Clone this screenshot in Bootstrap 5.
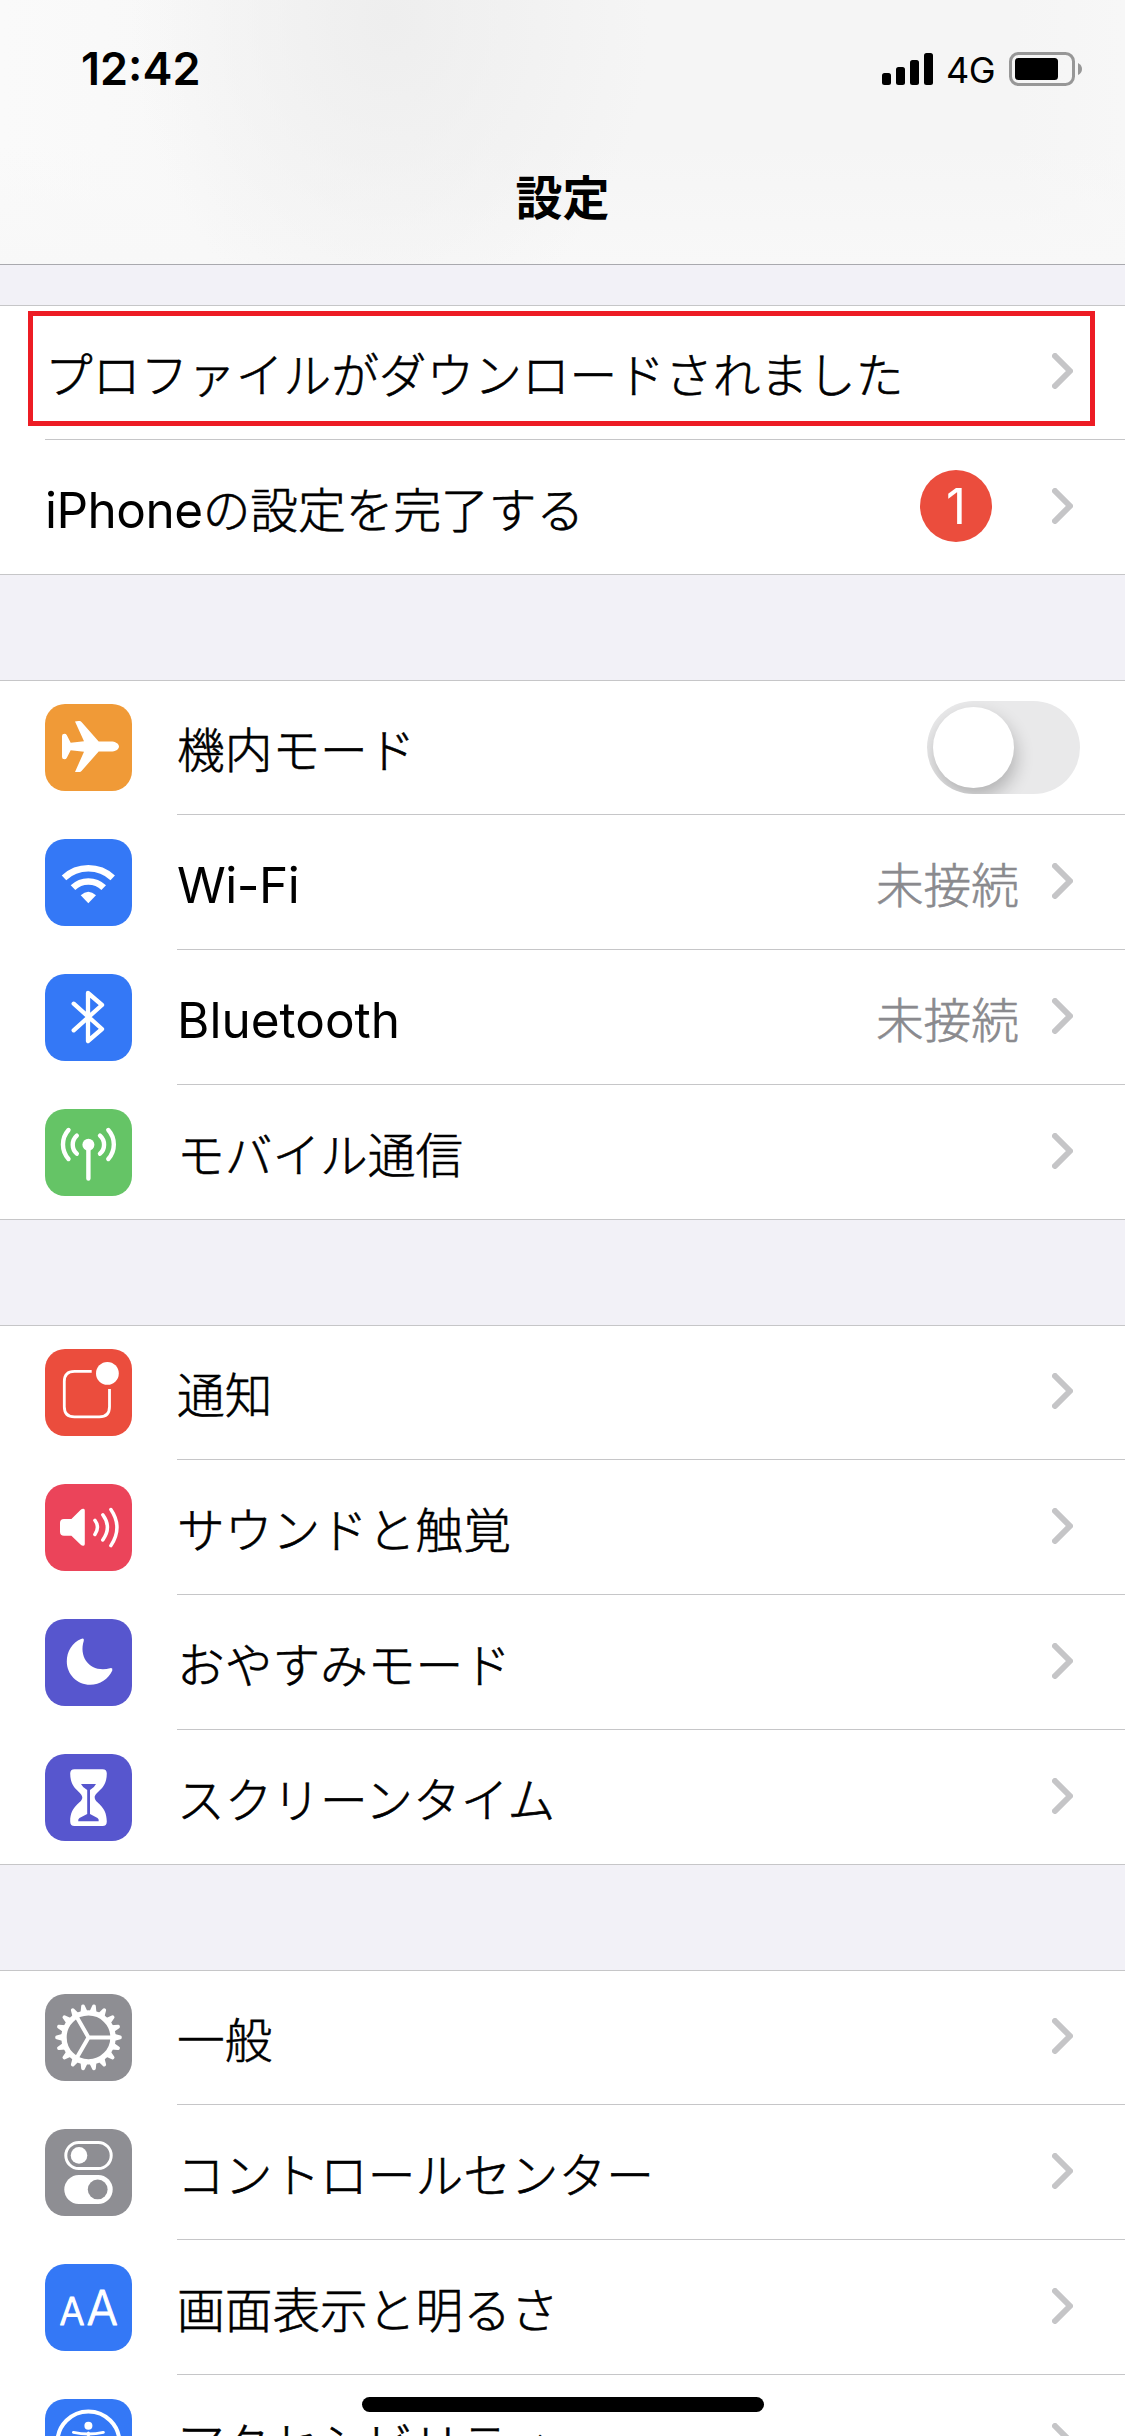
<!DOCTYPE html>
<html lang="ja">
<head>
<meta charset="utf-8">
<meta name="viewport" content="width=device-width, initial-scale=1">
<title>設定</title>
<link href="https://cdn.jsdelivr.net/npm/bootstrap@5.3.0/dist/css/bootstrap.min.css" rel="stylesheet">
<style>
  body { font-family: Inter, "Noto Sans CJK JP", sans-serif; font-size: 47.7px; background: #f2f1f7; color: #000; }
  .top-area { height: 265px; border-bottom: 1px solid #a9a9ae; background: radial-gradient(ellipse 260px 320px at 390px 20px, #eeeeee, rgba(238,238,238,0)), linear-gradient(180deg, rgba(249,249,249,0) 55%, #f8f8f8 100%), linear-gradient(90deg, #fafafa 0, #f5f5f5 45%, #f5f5f5 90%, #f7f7f7 100%); }
  .status-line { height: 138px; padding: 0 43px 1px 81px; }
  .clock { font-size: 45px; font-weight: 600; line-height: 1; }
  .net { font-size: 36px; line-height: 1; letter-spacing: -.5px; padding: 2px 14px 0 13px; }
  .page-title { font-size: 47px; font-weight: 700; line-height: 1; padding-top: 36px; }
  .groups { padding-top: 40px; gap: 105px; }
  .cells { background: #fff; box-shadow: inset 0 1px #c6c6c8, inset 0 -1px #c6c6c8; }
  .cell-row { height: 135px; padding: 0 0 3px 45px; position: relative; }
  .cell-row:not(:last-child)::after { content: ""; position: absolute; left: 177px; right: 0; bottom: 0; height: 1px; background: #c6c6c8; }
  .plain .cell-row:not(:last-child)::after { left: 45px; }
  .tile { width: 87px; height: 87px; border-radius: 20px; margin: 3px 45px 0 0; flex: none; }
  .tile svg, .chev { display: block; }
  .caption { line-height: 70px; padding-top: 9px; white-space: nowrap; font-weight: 300; -webkit-text-stroke: .6px currentColor; }
  .latin { font-size: 49.5px; font-weight: 400; -webkit-text-stroke: 0; }
  .caption.latin { padding-top: 8px; font-weight: 400; -webkit-text-stroke: 0; }
  .snug { letter-spacing: -.5px; }
  .state { color: #8a8a8e; }
  .tail { padding-right: 52px; gap: 33px; }
  .count { width: 72px; height: 72px; background: #eb4d3d; color: #fff; font-size: 49px; padding-top: 2px; margin-right: 27px; }
  .knob-track { width: 153px; height: 93px; margin: 3px 45px 0 0; padding: 6px; background: #e9e9ea; overflow: hidden; }
  .knob { width: 81px; height: 81px; background: #fff; box-shadow: 2px 9px 18px rgba(0,0,0,.24); }
  .frame-red { position: absolute; left: 28px; top: 6px; width: 1067px; height: 115px; border: 5px solid #ed1c24; }
  .home-bar { position: absolute; left: 362px; bottom: 24px; width: 402px; height: 15px; background: #000; }
  .c-orange { background: #f09a37; } .c-blue { background: #3478f6; } .c-green { background: #65c466; }
  .c-red { background: #eb4d3d; } .c-pink { background: #eb445a; } .c-indigo { background: #5756ce; } .c-gray { background: #8e8e93; }
</style>
</head>
<body>
<svg width="0" height="0" class="position-absolute">
  <symbol id="chev" viewBox="0 0 21 36"><path d="M3 3L18 18L3 33" fill="none" stroke="#c5c5c7" stroke-width="6" stroke-linecap="round" stroke-linejoin="round"/></symbol>
</svg>
<div class="vh-100 overflow-hidden position-relative">
  <header class="top-area">
    <div class="status-line d-flex align-items-center justify-content-between">
      <span class="clock" id="clock">12:42</span>
      <div class="d-flex align-items-center">
        <svg width="51" height="34" viewBox="0 0 51 34"><rect y="21" width="9" height="12" rx="2.5"/><rect x="14" y="15" width="9" height="18" rx="2.5"/><rect x="28" y="8" width="9" height="25" rx="2.5"/><rect x="42" y="1" width="9" height="32" rx="2.5"/></svg>
        <span class="net">4G</span>
        <svg width="73" height="34" viewBox="0 0 73 34"><rect x="1.5" y="1.5" width="63" height="31" rx="8" fill="none" stroke="#979797" stroke-width="3"/><rect x="6" y="6" width="43" height="22" rx="3.5"/><path d="M69 11Q73 13 73 17Q73 21 69 23Z" fill="#979797"/></svg>
      </div>
    </div>
    <div class="text-center page-title">設定</div>
  </header>

  <main class="groups d-flex flex-column">
    <section class="cells plain">
      <div class="cell-row d-flex align-items-center justify-content-between">
        <span class="caption">プロファイルがダウンロードされました</span>
        <div class="tail"><svg class="chev" width="21" height="36"><use href="#chev"/></svg></div>
        <div class="frame-red"></div>
      </div>
      <div class="cell-row d-flex align-items-center justify-content-between">
        <span class="caption"><span class="latin snug">iPhone</span>の設定を完了する</span>
        <div class="tail d-flex align-items-center"><span class="count rounded-circle d-flex align-items-center justify-content-center">1</span><svg class="chev" width="21" height="36"><use href="#chev"/></svg></div>
      </div>
    </section>

    <section class="cells">
      <div class="cell-row d-flex align-items-center">
        <div class="tile c-orange"><svg width="87" height="87" fill="#fff"><path d="M74 42.5C74 45.5 70 47.5 66 47.5H53.7L36.5 67Q35.8 68 34.5 68H30L39 47.7L25.7 46.3L21.7 54Q21 55.2 19.5 55.2Q17 55.2 17 53V32Q17 29.8 19.5 29.8Q21 29.8 21.7 31L25.7 38.7L39 37.3L30 17.5Q32 16.8 34.5 17Q35.8 17 36.5 18L53.7 37.5H66C70 37.5 74 39.5 74 42.5Z"/></svg></div>
        <span class="caption">機内モード</span>
        <div class="knob-track rounded-pill ms-auto"><div class="knob rounded-circle"></div></div>
      </div>
      <div class="cell-row d-flex align-items-center">
        <div class="tile c-blue"><svg width="87" height="87" fill="none" stroke="#fff" stroke-width="6.6"><path d="M19 38.8A35.8 35.8 0 0 1 67.7 38.8M28 48.7A22 22 0 0 1 58.7 48.7"/><path d="M35.7 56.3Q43.3 49.2 51 56.3L43.3 64.3Z" fill="#fff" stroke="none"/></svg></div>
        <span class="caption latin snug">Wi-Fi</span>
        <div class="tail d-flex align-items-center ms-auto"><span class="caption state">未接続</span><svg class="chev" width="21" height="36"><use href="#chev"/></svg></div>
      </div>
      <div class="cell-row d-flex align-items-center">
        <div class="tile c-blue"><svg width="87" height="87" fill="none" stroke="#fff" stroke-width="4.3" stroke-linecap="round" stroke-linejoin="round"><path d="M28.7 29.7L57 55L43 67V19L57 31L28.7 56.3"/></svg></div>
        <span class="caption latin">Bluetooth</span>
        <div class="tail d-flex align-items-center ms-auto"><span class="caption state">未接続</span><svg class="chev" width="21" height="36"><use href="#chev"/></svg></div>
      </div>
      <div class="cell-row d-flex align-items-center">
        <div class="tile c-green"><svg width="87" height="87" fill="none" stroke="#fff" stroke-width="4.4" stroke-linecap="round"><circle cx="43.4" cy="35.7" r="6" fill="#fff" stroke="none"/><path d="M43.4 36V69.5M55 26.7A12 12 0 0 1 55 44.7M31.8 26.7A12 12 0 0 0 31.8 44.7M63.3 21A21.8 21.8 0 0 1 63.3 50M23.5 21A21.8 21.8 0 0 0 23.5 50"/></svg></div>
        <span class="caption">モバイル通信</span>
        <div class="tail ms-auto"><svg class="chev" width="21" height="36"><use href="#chev"/></svg></div>
      </div>
    </section>

    <section class="cells">
      <div class="cell-row d-flex align-items-center">
        <div class="tile c-red"><svg width="87" height="87" fill="none" stroke="#fff" stroke-width="2.8"><path d="M46.7 22.4H29.5Q19.3 22.4 19.3 32.5V57.7Q19.3 67.8 29.5 67.8H54.3Q64.5 67.8 64.5 57.7V40"/><circle cx="62.4" cy="24.4" r="11.4" fill="#fff" stroke="none"/></svg></div>
        <span class="caption">通知</span>
        <div class="tail ms-auto"><svg class="chev" width="21" height="36"><use href="#chev"/></svg></div>
      </div>
      <div class="cell-row d-flex align-items-center">
        <div class="tile c-pink"><svg width="87" height="87" fill="none" stroke="#fff" stroke-width="3.5" stroke-linecap="round"><path d="M19 35H26.4L35.5 26Q37 24.5 38.5 24.7Q39.8 25 39.8 26.5V60Q39.8 61.6 38.5 61.8Q37 62 35.5 60.5L26.4 51.8H19Q15 51.8 15 47.8V39Q15 35 19 35Z" fill="#fff" stroke="none"/><path d="M49.9 36.3Q55 43.3 49.9 50.5M57.8 30.8Q67 43.3 57.8 56M65.9 25.5Q78 43.3 65.9 61.6"/></svg></div>
        <span class="caption">サウンドと触覚</span>
        <div class="tail ms-auto"><svg class="chev" width="21" height="36"><use href="#chev"/></svg></div>
      </div>
      <div class="cell-row d-flex align-items-center">
        <div class="tile c-indigo"><svg width="87" height="87" fill="#fff"><path d="M36 20Q39.4 18.5 38.8 21.8C34 37 43 50.3 58 50.3Q61.5 50.3 65 49.2Q68 48.6 67.3 51.5C63.5 60 55 65.8 45.2 65.8C32 65.8 21.8 55.5 21.8 42.5C21.8 32 27.5 23.7 36 20Z"/></svg></div>
        <span class="caption">おやすみモード</span>
        <div class="tail ms-auto"><svg class="chev" width="21" height="36"><use href="#chev"/></svg></div>
      </div>
      <div class="cell-row d-flex align-items-center">
        <div class="tile c-indigo"><svg width="87" height="87" fill="#fff"><path d="M29.5 15.2H57.5Q61.8 15.2 61.8 19.5C61.8 36 49.7 37.5 49.7 43.6C49.7 49.5 61.8 51 61.8 67.5Q61.8 72 57.5 72H29.5Q25.2 72 25.2 67.5C25.2 51 37.3 49.5 37.3 43.6C37.3 37.5 25.2 36 25.2 19.5Q25.2 15.2 29.5 15.2Z"/><path fill="#5756ce" d="M36 30H51Q49.5 33.5 45 36V60L52.5 64Q54 65 53.7 67.3H33.2Q33 65 34.5 64L42.2 60V36Q37.5 33.5 36 30Z"/></svg></div>
        <span class="caption">スクリーンタイム</span>
        <div class="tail ms-auto"><svg class="chev" width="21" height="36"><use href="#chev"/></svg></div>
      </div>
    </section>

    <section class="cells">
      <div class="cell-row d-flex align-items-center">
        <div class="tile c-gray"><svg width="87" height="87" fill="none" stroke="#fff"><circle cx="43.5" cy="43.4" r="24.5" stroke-width="5.4"/><path stroke-width="4" d="M68 43.4H43.5L31.5 22.5M43.5 43.4L31.5 64.3"/><g id="teeth" fill="#fff" stroke="none"></g></svg></div>
        <span class="caption">一般</span>
        <div class="tail ms-auto"><svg class="chev" width="21" height="36"><use href="#chev"/></svg></div>
      </div>
      <div class="cell-row d-flex align-items-center">
        <div class="tile c-gray"><svg width="87" height="87"><rect x="20.8" y="13.5" width="45.4" height="26" rx="13" fill="none" stroke="#fff" stroke-width="3"/><circle cx="34" cy="26.4" r="8.3" fill="#fff"/><rect x="19.3" y="46" width="48.4" height="29" rx="14.5" fill="#fff"/><circle cx="52.7" cy="60.4" r="9.9" fill="#8e8e93"/></svg></div>
        <span class="caption">コントロールセンター</span>
        <div class="tail ms-auto"><svg class="chev" width="21" height="36"><use href="#chev"/></svg></div>
      </div>
      <div class="cell-row d-flex align-items-center">
        <div class="tile c-blue"><svg width="87" height="87" fill="#fff" stroke="#fff" stroke-linejoin="round" font-family="Inter" font-weight="300"><text x="14.6" y="61.4" font-size="37.5" textLength="25" lengthAdjust="spacingAndGlyphs" stroke-width="1.2">A</text><text x="41.6" y="61.4" font-size="48.5" textLength="31.5" lengthAdjust="spacingAndGlyphs" stroke-width=".9">A</text></svg></div>
        <span class="caption">画面表示と明るさ</span>
        <div class="tail ms-auto"><svg class="chev" width="21" height="36"><use href="#chev"/></svg></div>
      </div>
      <div class="cell-row d-flex align-items-center">
        <div class="tile c-blue"><svg width="87" height="87" fill="none" stroke="#fff" stroke-width="4"><circle cx="43.4" cy="43.4" r="31"/><circle cx="43.4" cy="26.7" r="4" fill="#fff" stroke="none"/><path d="M28.5 33.4Q43.4 36.5 58.3 33.4M43.4 34V48L36 63M43.4 48L51 63" stroke-width="3" stroke-linecap="round"/></svg></div>
        <span class="caption">アクセシビリティ</span>
        <div class="tail ms-auto"><svg class="chev" width="21" height="36"><use href="#chev"/></svg></div>
      </div>
    </section>
  </main>
  <div class="home-bar rounded-pill"></div>
</div>
<script src="https://cdn.jsdelivr.net/npm/bootstrap@5.3.0/dist/js/bootstrap.bundle.min.js"></script>
<script>
  // Eighteen evenly spaced gear teeth.
  const teeth = document.getElementById('teeth');
  for (let i = 0; i < 18; i++) {
    const p = document.createElementNS('http://www.w3.org/2000/svg', 'path');
    p.setAttribute('d', 'M69 39.8L75.5 41.6Q76.8 41.8 76.8 43.4Q76.8 45 75.5 45.2L69 47Z');
    p.setAttribute('transform', 'rotate(' + i * 20 + ' 43.5 43.4)');
    teeth.appendChild(p);
  }
</script>
</body>
</html>
